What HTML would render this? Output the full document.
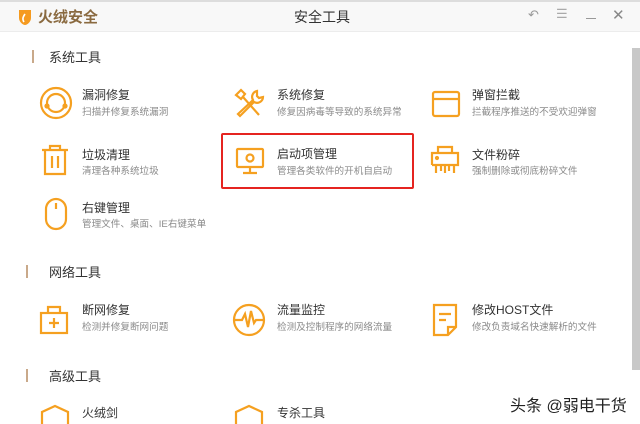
<!DOCTYPE html>
<html><head><meta charset="utf-8"><style>
*{margin:0;padding:0;box-sizing:border-box}
body{width:640px;height:423px;overflow:hidden;background:#fff;font-family:"Liberation Sans","Noto Sans CJK SC",sans-serif;position:relative}
.hdr{position:absolute;left:0;top:0;width:640px;height:32px;background:#f8f8f8;border-bottom:1px solid #ececec}
.abs{position:absolute;white-space:nowrap}
.sec{font-size:13px;color:#333}
.bar{position:absolute;width:2px;height:13px;background:#c9a98a}
.t{font-size:12px;color:#333}
.s{font-size:9.6px;color:#8a8a8a}
svg.i{position:absolute;fill:none;stroke:#f5a020;stroke-width:2.2}
</style></head><body>
<div class="hdr"></div>
<div style="position:absolute;left:0;top:0;width:640px;height:2px;background:#ddd"></div>
<svg class="abs" style="left:17px;top:8px" width="16" height="18" viewBox="0 0 16 18"><path d="M2 2 L14 2 L14 10 C14 14 10 17 8 17 C6 17 2 14 2 10Z" fill="#f59a1f"/><path d="M8 6 C6 9 5 11 7 14" stroke="#fff" stroke-width="1.6" fill="none"/></svg>
<div class="abs" style="left:38px;top:6px;font-size:15px;font-weight:bold;color:#8a6a40">火绒安全</div>
<div class="abs" style="left:294px;top:7px;font-size:14px;color:#333">安全工具</div>
<div class="abs" style="left:528px;top:7px;font-size:13px;color:#999">↶</div>
<div class="abs" style="left:556px;top:6px;font-size:13px;color:#aaa">☰</div>
<div class="abs" style="left:586px;top:18px;width:10px;height:1px;background:#999"></div>
<div class="abs" style="left:612px;top:6px;font-size:15px;color:#888">✕</div>
<div class="abs" style="left:632px;top:48px;width:8px;height:322px;background:#c8c8c8"></div>

<div class="bar" style="left:32px;top:50px"></div><div class="abs sec" style="left:49px;top:47px">系统工具</div>
<div class="bar" style="left:26px;top:265px"></div><div class="abs sec" style="left:49px;top:262px">网络工具</div>
<div class="bar" style="left:26px;top:369px"></div><div class="abs sec" style="left:49px;top:366px">高级工具</div>

<svg class="i" style="left:39px;top:86px" width="34" height="34" viewBox="0 0 34 34"><circle cx="17" cy="17" r="15"/><circle cx="17" cy="17" r="9"/><circle cx="8" cy="20" r="1.5" fill="#f5a020"/><circle cx="26" cy="20" r="1.5" fill="#f5a020"/></svg>
<div class="abs t" style="left:82px;top:86px">漏洞修复</div><div class="abs s" style="left:82px;top:104px">扫描并修复系统漏洞</div>
<svg class="i" style="left:233px;top:88px" width="32" height="30" viewBox="0 0 32 30"><path d="M3 7 L8 2 L12 6 L8 11Z M10 9 L26 27"/><path d="M24 3 A6 6 0 0 0 20 12 L5 26 L7 28 L21 14 A6 6 0 0 0 30 9 L26 10 L24 8Z"/></svg>
<div class="abs t" style="left:277px;top:86px">系统修复</div><div class="abs s" style="left:277px;top:104px">修复因病毒等导致的系统异常</div>
<svg class="i" style="left:431px;top:90px" width="30" height="28" viewBox="0 0 30 28"><rect x="2" y="2" width="26" height="24" rx="2"/><path d="M2 9 H28"/></svg>
<div class="abs t" style="left:472px;top:86px">弹窗拦截</div><div class="abs s" style="left:472px;top:104px">拦截程序推送的不受欢迎弹窗</div>

<svg class="i" style="left:40px;top:144px" width="30" height="32" viewBox="0 0 30 32"><path d="M2 6 H28 M10 6 V2 H20 V6 M5 6 V30 H25 V6 M12 12 V24 M18 12 V24"/></svg>
<div class="abs t" style="left:82px;top:146px">垃圾清理</div><div class="abs s" style="left:82px;top:163px">清理各种系统垃圾</div>
<div class="abs" style="left:221px;top:133px;width:193px;height:56px;border:2px solid #e52420;border-radius:2px"></div>
<svg class="i" style="left:235px;top:147px" width="30" height="28" viewBox="0 0 30 28"><rect x="2" y="2" width="26" height="18" rx="1"/><circle cx="15" cy="11" r="3.5"/><path d="M15 20 V25 M8 26 H22"/></svg>
<div class="abs t" style="left:277px;top:145px">启动项管理</div><div class="abs s" style="left:277px;top:163px">管理各类软件的开机自启动</div>
<svg class="i" style="left:430px;top:145px" width="30" height="30" viewBox="0 0 30 30"><path d="M8 8 V2 H22 V8 M2 20 V8 H28 V20 H2 M6 20 V28 M11 20 V26 M15 20 V28 M19 20 V26 M24 20 V28"/><circle cx="7" cy="13" r="1" fill="#f5a020"/></svg>
<div class="abs t" style="left:472px;top:146px">文件粉碎</div><div class="abs s" style="left:472px;top:163px">强制删除或彻底粉碎文件</div>

<svg class="i" style="left:44px;top:197px" width="24" height="34" viewBox="0 0 24 34"><rect x="2" y="2" width="20" height="30" rx="10"/><path d="M12 6 V12"/></svg>
<div class="abs t" style="left:82px;top:199px">右键管理</div><div class="abs s" style="left:82px;top:216px">管理文件、桌面、IE右键菜单</div>

<svg class="i" style="left:39px;top:305px" width="30" height="30" viewBox="0 0 30 30"><path d="M9 8 V2 H21 V8"/><rect x="2" y="8" width="26" height="20"/><path d="M15 13 V23 M10 18 H20"/></svg>
<div class="abs t" style="left:82px;top:301px">断网修复</div><div class="abs s" style="left:82px;top:319px">检测并修复断网问题</div>
<svg class="i" style="left:232px;top:303px" width="34" height="34" viewBox="0 0 34 34"><circle cx="17" cy="17" r="15"/><path d="M2 17 H10 L13 11 L16 24 L19 8 L22 20 L24 17 H32"/></svg>
<div class="abs t" style="left:277px;top:301px">流量监控</div><div class="abs s" style="left:277px;top:319px">检测及控制程序的网络流量</div>
<svg class="i" style="left:432px;top:303px" width="26" height="34" viewBox="0 0 26 34"><path d="M2 2 H24 V24 L16 32 H2Z M16 32 V24 H24 M7 11 H19 M7 17 H14"/></svg>
<div class="abs t" style="left:472px;top:301px">修改HOST文件</div><div class="abs s" style="left:472px;top:319px">修改负责域名快速解析的文件</div>

<svg class="i" style="left:40px;top:404px" width="30" height="20" viewBox="0 0 30 20"><path d="M2 20 V8 L15 2 L28 8 V20"/></svg>
<div class="abs t" style="left:82px;top:404px">火绒剑</div>
<svg class="i" style="left:234px;top:404px" width="30" height="20" viewBox="0 0 30 20"><path d="M2 20 V8 L15 2 L28 8 V20"/></svg>
<div class="abs t" style="left:277px;top:404px">专杀工具</div>
<div class="abs" style="left:510px;top:392px;font-size:16px;color:#222;text-shadow:0 0 3px #fff">头条 @弱电干货</div>
</body></html>
